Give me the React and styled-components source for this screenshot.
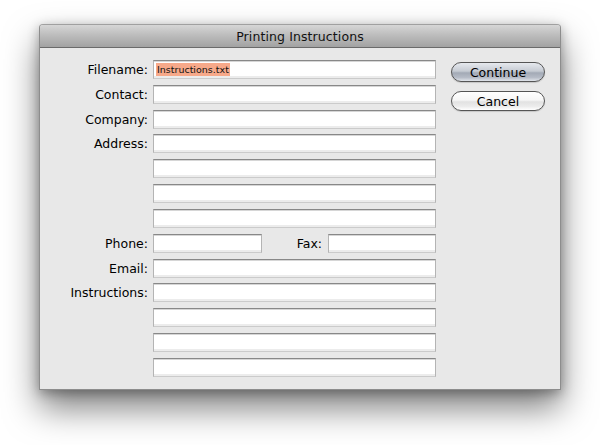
import React from "react";
import styled, { createGlobalStyle } from "styled-components";

const GlobalStyle = createGlobalStyle`
  html, body {
    margin: 0;
    background: #ffffff;
  }
  body {
    font-family: "DejaVu Sans", "Liberation Sans", sans-serif;
  }
`;

const Page = styled.div`
  width: 600px;
  height: 445px;
  padding: 24px 39px;
  box-sizing: border-box;
`;

const Window = styled.div`
  width: 522px;
  height: 366px;
  box-sizing: border-box;
  border: 1px solid #8d8d8d;
  border-top-color: #a0a0a0;
  border-radius: 4px 4px 0 0;
  background: #e8e8e8;
  box-shadow: 0 18px 34px rgba(0, 0, 0, 0.5), 0 3px 12px rgba(0, 0, 0, 0.3);
  display: flex;
  flex-direction: column;
  overflow: hidden;
`;

const TitleBar = styled.div`
  height: 22px;
  flex: none;
  display: flex;
  align-items: center;
  justify-content: center;
  background: linear-gradient(to bottom, #d6d6d6 0%, #bdbdbd 45%, #a2a2a2 100%);
  border-bottom: 1px solid #6a6a6a;
  font-size: 12.5px;
  color: #111;
  letter-spacing: 0.1px;
`;

const Body = styled.div`
  flex: 1;
  display: flex;
  align-items: flex-start;
  padding: 12px 0 0 20px;
`;

const Form = styled.div`
  display: grid;
  grid-template-columns: 88px 283px;
  grid-auto-rows: 19px;
  column-gap: 5px;
  row-gap: 5.83px;
`;

const Label = styled.label`
  grid-column: 1;
  display: flex;
  align-items: center;
  justify-content: flex-end;
  font-size: 12.5px;
  color: #000;
  white-space: nowrap;
`;

const Field = styled.div`
  grid-column: 2;
  width: ${(p) => p.width || "283px"};
  height: 19px;
  box-sizing: border-box;
  border: 1px solid;
  border-color: #888 #b4b4b4 #cbcbcb #b4b4b4;
  background: #ffffff;
  box-shadow: inset 0 1px 0 #d6d6d6, inset 0 -2px 0 #ececec;
  display: flex;
  align-items: center;
  padding: 0 2px;
`;

const Selected = styled.span`
  font-family: "DejaVu Sans", sans-serif;
  font-size: 9.5px;
  line-height: 13px;
  color: #111;
  background: #f7a98a;
  padding: 0 1px;
`;

const SplitRow = styled.div`
  grid-column: 2;
  display: flex;
  align-items: center;
`;

const InlineLabel = styled.span`
  flex: 1;
  text-align: right;
  padding-right: 6px;
  font-size: 12.5px;
  color: #000;
`;

const Buttons = styled.div`
  margin: 2px 0 0 15px;
  display: flex;
  flex-direction: column;
  gap: 9px;
`;

const Button = styled.button`
  width: 94px;
  height: 20px;
  box-sizing: border-box;
  border-radius: 10px;
  border: 1px solid #555;
  font-family: "DejaVu Sans", sans-serif;
  font-size: 12.5px;
  color: #000;
  padding: 0;
  background: ${(p) =>
    p.primary
      ? "linear-gradient(to bottom, #e6e9ee 0%, #c6cbd3 45%, #a3aab6 55%, #b5bbc6 80%, #e0e4ea 100%)"
      : "linear-gradient(to bottom, #ffffff 0%, #f6f6f6 45%, #e2e2e2 55%, #ececec 80%, #ffffff 100%)"};
  box-shadow: 0 1px 1px rgba(0, 0, 0, 0.15);
`;

const rows = [
  "Filename:",
  "Contact:",
  "Company:",
  "Address:",
  "",
  "",
  "",
  "PHONE",
  "Email:",
  "Instructions:",
  "",
  "",
  "",
];

export default function App() {
  return (
    <>
      <GlobalStyle />
      <Page>
        <Window>
          <TitleBar>Printing Instructions</TitleBar>
          <Body>
            <Form>
              {rows.map((label, i) =>
                label === "PHONE" ? (
                  <React.Fragment key={i}>
                    <Label>Phone:</Label>
                    <SplitRow>
                      <Field width="109px" />
                      <InlineLabel>Fax:</InlineLabel>
                      <Field width="108px" />
                    </SplitRow>
                  </React.Fragment>
                ) : (
                  <React.Fragment key={i}>
                    <Label>{label}</Label>
                    <Field>
                      {i === 0 && <Selected>Instructions.txt</Selected>}
                    </Field>
                  </React.Fragment>
                )
              )}
            </Form>
            <Buttons>
              <Button primary>Continue</Button>
              <Button>Cancel</Button>
            </Buttons>
          </Body>
        </Window>
      </Page>
    </>
  );
}
